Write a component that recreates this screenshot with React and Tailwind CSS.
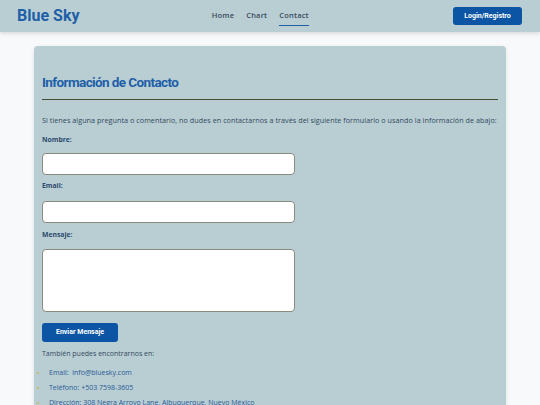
import { useState } from 'react'

const body = { fontFamily: '"Open Sans", "Noto Sans", sans-serif' }
const head = { fontFamily: 'Roboto, "Liberation Sans", Arial, sans-serif' }

export default function App() {
  const [form, setForm] = useState({ nombre: '', email: '', mensaje: '' })
  const set = (k) => (e) => setForm({ ...form, [k]: e.target.value })

  return (
    <div className="min-h-[405px] bg-[#f8f9fb]" style={body}>
      {/* Header */}
      <header className="h-[32px] bg-[#b8ced3] shadow-[0_2px_4px_rgba(0,0,0,0.12)] flex items-center justify-between pl-[17px] pr-[18px]">
        <span className="text-[16px] font-bold text-[#1f5fa8]" style={head}>Blue Sky</span>
        <nav className="flex items-center gap-[12px] mr-[12px] text-[7.5px] tracking-[0.2px] font-semibold text-[#3a4a5c]">
          <a className="py-[4px]">Home</a>
          <a className="py-[4px]">Chart</a>
          <a className="py-[4px] border-b border-[#1f5fa8]">Contact</a>
        </nav>
        <button className="h-[18px] w-[69px] rounded-[3px] bg-[#0b55a4] text-white text-[7px] font-bold" style={head}>
          Login/Registro
        </button>
      </header>

      {/* Card */}
      <main className="pt-[14px] px-[34px]">
        <section className="bg-[#b8ced3] rounded-[4px] shadow-[0_1px_4px_rgba(0,0,0,0.1)] px-[8px] pt-[27px] pb-[20px]">
          <h2 className="text-[13.5px] leading-[18px] font-bold tracking-[-0.6px] text-[#1f5fa8]" style={head}>Información de Contacto</h2>
          <hr className="mt-[8px] border-0 h-[1px] bg-[#4a4b32]" />
          <p className="mt-[15px] text-[7.2px] leading-[10px] tracking-[0.05px] text-[#34495e] whitespace-nowrap">
            Si tienes alguna pregunta o comentario, no dudes en contactarnos a través del siguiente formulario o usando la información de abajo:
          </p>

          <label className="block mt-[10px] text-[6.8px] leading-[10px] font-bold text-[#2c4a6e]">Nombre:</label>
          <input value={form.nombre} onChange={set('nombre')}
            className="block mt-[8px] w-[253px] h-[22px] bg-white border border-[#8a8a80] rounded-[4px]" />

          <label className="block mt-[6px] text-[6.8px] leading-[10px] font-bold text-[#2c4a6e]">Email:</label>
          <input value={form.email} onChange={set('email')}
            className="block mt-[10px] w-[253px] h-[22px] bg-white border border-[#8a8a80] rounded-[4px]" />

          <label className="block mt-[7px] text-[6.8px] leading-[10px] font-bold text-[#2c4a6e]">Mensaje:</label>
          <textarea value={form.mensaje} onChange={set('mensaje')}
            className="block mt-[9px] w-[253px] h-[63px] bg-white border border-[#8a8a80] rounded-[4px] resize-none" />

          <button className="block mt-[11px] h-[19px] w-[76px] rounded-[3px] bg-[#0b55a4] text-white text-[7px] font-bold" style={head}>
            Enviar Mensaje
          </button>

          <p className="mt-[7px] text-[7px] leading-[10px] text-[#34495e]">También puedes encontrarnos en:</p>
          <ul className="mt-[6px] text-[7px] leading-[10px] text-[#2a5a96]">
            {['Email:  info@bluesky.com', 'Teléfono: +503 7598-3605', 'Dirección: 308 Negra Arroyo Lane, Albuquerque, Nuevo México'].map(t => (
              <li key={t} className="flex items-center h-[15px]">
                <span className="w-[2px] h-[2px] bg-[#c9b94a] rounded-full -ml-[5px] mr-[10px]" />
                <span className="whitespace-pre">{t}</span>
              </li>
            ))}
          </ul>
        </section>
      </main>
    </div>
  )
}
